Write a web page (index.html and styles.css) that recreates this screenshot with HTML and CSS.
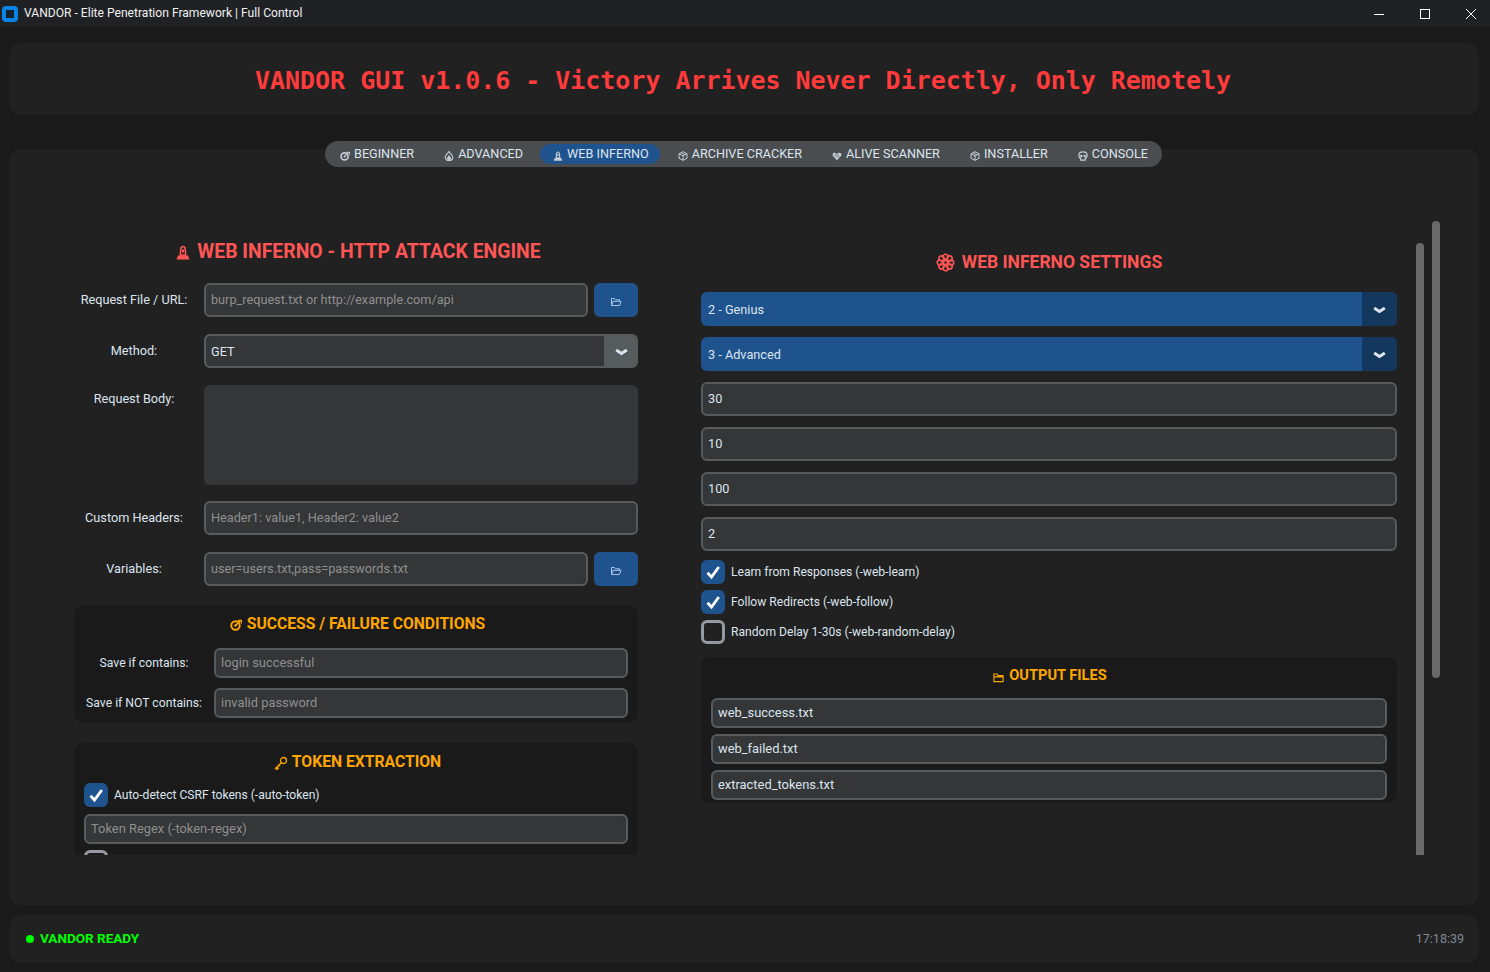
FILE: index.html
```html
<!DOCTYPE html>
<html lang="en">
<head>
    <meta charset="UTF-8">
    <title>VANDOR - Elite Penetration Framework | Full Control</title>
    <link rel="stylesheet" href="styles.css">
</head>
<body>
    <svg class="defs" aria-hidden="true">
        <symbol id="i-target" viewBox="0 0 12 12"><circle cx="5.5" cy="6.5" r="4.2" fill="none" stroke="currentColor" stroke-width="2"/><circle cx="5.5" cy="6.5" r="1.2" fill="currentColor"/><path d="M5.5 6.5 10 2M8 1.5h3.500v3" fill="none" stroke="currentColor" stroke-width="1.500"/></symbol>
        <symbol id="i-fire" viewBox="0 0 12 12"><path d="M6 .5C7 3 10.500 4.500 10.500 7.500 10.500 10 8.500 11.500 6 11.500S1.500 10 1.500 7.500C1.500 4.500 5 3 6 .5Z" fill="none" stroke="currentColor" stroke-width="1.400"/><path d="M6 4.500C6.500 6.500 8.500 7.500 8.500 9 8.500 10.300 7.300 11 6 11S3.500 10.300 3.500 9C3.500 7.500 5.500 6.500 6 4.500Z" fill="currentColor"/></symbol>
        <symbol id="i-siren" viewBox="0 0 14 15"><path d="M.5 14.500 2 10.500H12L13.500 14.500Z" fill="currentColor"/><path d="M4.300 10 4.800 4C5 2.300 5.800 1.500 7 1.500S9 2.300 9.200 4L9.700 10Z" fill="none" stroke="currentColor" stroke-width="1.600"/><rect x="6" y="4.500" width="2" height="3" fill="currentColor"/></symbol>
        <symbol id="i-box" viewBox="0 0 12 12"><path d="M6 .8 10.800 3.300V8.700L6 11.200 1.200 8.700V3.300ZM1.200 3.300 6 5.800 10.800 3.300M6 5.800V11.200M3.600 2 8.400 4.600" fill="none" stroke="currentColor" stroke-width="1.200"/></symbol>
        <symbol id="i-heart" viewBox="0 0 12 12"><path d="M6 11 1.200 6C-.2 3.800 1.500 1.800 3.400 2.200 4.600 2.400 5.500 3.200 6 4 6.500 3.200 7.400 2.400 8.600 2.200 10.500 1.800 12.200 3.800 10.800 6Z" fill="currentColor"/><path d="M2.500 5 9 8M4 3.500l5 2.500" stroke="#4a4d50" stroke-width=".6"/></symbol>
        <symbol id="i-skull" viewBox="0 0 12 12"><path d="M6 1C3 1 1 3 1 5.500 1 7.300 2 8.300 3.300 8.800V11H8.700V8.800C10 8.300 11 7.300 11 5.500 11 3 9 1 6 1Z" fill="none" stroke="currentColor" stroke-width="1.500"/><circle cx="4" cy="6" r="1.500" fill="currentColor"/><circle cx="8" cy="6" r="1.500" fill="currentColor"/></symbol>
        <symbol id="i-flower" viewBox="0 0 20 20" fill="none" stroke="currentColor" stroke-width="1.700"><circle cx="10" cy="4" r="2.700"/><circle cx="10" cy="16" r="2.700"/><circle cx="4" cy="10" r="2.700"/><circle cx="16" cy="10" r="2.700"/><circle cx="5.700" cy="5.700" r="2.700"/><circle cx="14.300" cy="5.700" r="2.700"/><circle cx="5.700" cy="14.300" r="2.700"/><circle cx="14.300" cy="14.300" r="2.700"/><circle cx="10" cy="10" r="2.200"/></symbol>
        <symbol id="i-open" viewBox="0 0 12 10" fill="none" stroke="currentColor" stroke-width="1"><path d="M1.500 8.500V1.500H4.500L5.500 2.800H9.500V4.300M1.500 8.500 3 4.300H11L9.500 8.500Z"/></symbol>
        <symbol id="i-key" viewBox="0 0 14 14" fill="none" stroke="currentColor" stroke-width="1.300"><circle cx="9.500" cy="4.500" r="3"/><path d="M7.300 6.700 1.500 12.500 3 13.500 4.300 12.200 3.300 11.200M5 9l1.200 1.200"/></symbol>
        <symbol id="i-folder" viewBox="0 0 12 11" fill="none" stroke="currentColor" stroke-width="1.200"><path d="M1 2.600V10H11V3.500H5.500L4.500 1.600H1ZM1 4.800H11"/></symbol>
        <symbol id="i-check" viewBox="0 0 24 24"><path d="M6.500 12.800 10.500 17 17.800 7" fill="none" stroke="#fff" stroke-width="2.800"/></symbol>
        <symbol id="i-chevron" viewBox="0 0 13 8"><path d="M1.200 2 6.500 5.500 11.800 2" fill="none" stroke="currentColor" stroke-width="3"/></symbol>
    </svg>

    <div class="titlebar">
        <span class="app-icon"></span>
        <span class="titlebar-text">VANDOR - Elite Penetration Framework | Full Control</span>
        <div class="win-controls">
            <svg width="12" height="12" viewBox="0 0 12 12"><path d="M1 6.500H11" stroke="#fff"/></svg>
            <svg width="12" height="12" viewBox="0 0 12 12"><rect x="1.500" y="1.500" width="9" height="9" fill="none" stroke="#fff"/></svg>
            <svg width="12" height="12" viewBox="0 0 12 12"><path d="M1 1 11 11M11 1 1 11" stroke="#fff"/></svg>
        </div>
    </div>

    <div class="header">
        <h1>VANDOR GUI v1.0.6 - Victory Arrives Never Directly, Only Remotely</h1>
    </div>

    <div class="main">
        <div class="tabs">
            <div class="tab"><svg class="tab-icon"><use href="#i-target"/></svg>BEGINNER</div>
            <div class="tab"><svg class="tab-icon"><use href="#i-fire"/></svg>ADVANCED</div>
            <div class="tab active"><svg class="tab-icon"><use href="#i-siren"/></svg>WEB INFERNO</div>
            <div class="tab"><svg class="tab-icon"><use href="#i-box"/></svg>ARCHIVE CRACKER</div>
            <div class="tab"><svg class="tab-icon"><use href="#i-heart"/></svg>ALIVE SCANNER</div>
            <div class="tab"><svg class="tab-icon"><use href="#i-box"/></svg>INSTALLER</div>
            <div class="tab"><svg class="tab-icon"><use href="#i-skull"/></svg>CONSOLE</div>
        </div>

        <div class="panes">
            <div class="left-col">
                <h2 class="heading heading-left"><svg class="heading-icon"><use href="#i-siren"/></svg>WEB INFERNO - HTTP ATTACK ENGINE</h2>

                <div class="row">
                    <label class="row-label">Request File / URL:</label>
                    <input class="field" type="text" placeholder="burp_request.txt or http://example.com/api">
                    <button class="browse"><svg class="browse-icon"><use href="#i-open"/></svg></button>
                </div>
                <div class="row">
                    <label class="row-label">Method:</label>
                    <div class="select select-grey">
                        <span class="select-value">GET</span>
                        <span class="select-arrow"><svg class="chevron"><use href="#i-chevron"/></svg></span>
                    </div>
                </div>
                <div class="row row-top row-body">
                    <label class="row-label">Request Body:</label>
                    <textarea class="body-text"></textarea>
                </div>
                <div class="row">
                    <label class="row-label">Custom Headers:</label>
                    <input class="field" type="text" placeholder="Header1: value1, Header2: value2">
                </div>
                <div class="row">
                    <label class="row-label">Variables:</label>
                    <input class="field" type="text" placeholder="user=users.txt,pass=passwords.txt">
                    <button class="browse"><svg class="browse-icon"><use href="#i-open"/></svg></button>
                </div>

                <div class="group group-conditions">
                    <h3 class="group-title"><svg class="group-icon"><use href="#i-target"/></svg>SUCCESS / FAILURE CONDITIONS</h3>
                    <div class="group-row">
                        <label class="row-label">Save if contains:</label>
                        <input class="field field-small" type="text" placeholder="login successful">
                    </div>
                    <div class="group-row">
                        <label class="row-label">Save if NOT contains:</label>
                        <input class="field field-small" type="text" placeholder="invalid password">
                    </div>
                </div>

                <div class="group group-token">
                    <h3 class="group-title"><svg class="group-icon group-icon-key"><use href="#i-key"/></svg>TOKEN EXTRACTION</h3>
                    <div class="check-row">
                        <span class="check on"><svg class="tick"><use href="#i-check"/></svg></span>
                        <span class="check-text">Auto-detect CSRF tokens (-auto-token)</span>
                    </div>
                    <input class="field field-small field-block" type="text" placeholder="Token Regex (-token-regex)">
                    <div class="check-row">
                        <span class="check"></span>
                    </div>
                </div>
            </div>

            <div class="right-col">
                <h2 class="heading heading-small"><svg class="heading-icon heading-icon-flower"><use href="#i-flower"/></svg>WEB INFERNO SETTINGS</h2>

                <div class="select select-blue">
                    <span class="select-value">2 - Genius</span>
                    <span class="select-arrow"><svg class="chevron"><use href="#i-chevron"/></svg></span>
                </div>
                <div class="select select-blue">
                    <span class="select-value">3 - Advanced</span>
                    <span class="select-arrow"><svg class="chevron"><use href="#i-chevron"/></svg></span>
                </div>
                <input class="field field-stack" type="text" value="30">
                <input class="field field-stack" type="text" value="10">
                <input class="field field-stack" type="text" value="100">
                <input class="field field-stack" type="text" value="2">

                <div class="checks">
                    <div class="check-row">
                        <span class="check on"><svg class="tick"><use href="#i-check"/></svg></span>
                        <span class="check-text">Learn from Responses (-web-learn)</span>
                    </div>
                    <div class="check-row">
                        <span class="check on"><svg class="tick"><use href="#i-check"/></svg></span>
                        <span class="check-text">Follow Redirects (-web-follow)</span>
                    </div>
                    <div class="check-row">
                        <span class="check"></span>
                        <span class="check-text">Random Delay 1-30s (-web-random-delay)</span>
                    </div>
                </div>

                <div class="group group-output">
                    <h3 class="group-title group-title-small"><svg class="group-icon group-icon-folder"><use href="#i-folder"/></svg>OUTPUT FILES</h3>
                    <input class="field field-small field-block" type="text" value="web_success.txt">
                    <input class="field field-small field-block" type="text" value="web_failed.txt">
                    <input class="field field-small field-block" type="text" value="extracted_tokens.txt">
                </div>
            </div>

            <div class="scroll-inner"></div>
            <div class="scroll-outer"></div>
        </div>
    </div>

    <div class="footer">
        <span class="status"><span class="status-dot"></span>VANDOR READY</span>
        <span class="clock">17:18:39</span>
    </div>
</body>
</html>
```

FILE: styles.css
```css
* {
    box-sizing: border-box;
    margin: 0;
    padding: 0;
}

html, body {
    height: 100%;
}

body {
    background-color: #1a1a1a;
    color: #dce4ee;
    font-family: Roboto, "Liberation Sans", sans-serif;
    font-size: 13px;
    overflow: hidden;
}

.defs {
    display: none;
}

/* window chrome */
.titlebar {
    display: flex;
    align-items: center;
    height: 27px;
    padding-left: 2px;
    background-color: #1f2125;
}

.app-icon {
    width: 16px;
    height: 16px;
    margin-right: 6px;
    border: 4px solid #0a84e8;
    border-radius: 4px;
    background-color: #14202c;
}

.titlebar-text {
    padding-bottom: 1px;
    font-size: 12.1px;
    color: #f0f0f0;
}

.win-controls {
    display: flex;
    gap: 34px;
    margin-left: auto;
    margin-right: 13px;
}

.header {
    display: flex;
    align-items: center;
    justify-content: center;
    height: 72px;
    margin: 16px 12px 0 9px;
    padding-top: 2px;
    border-radius: 12px;
    background-color: #212121;
    margin-right: 11px;
}

h1 {
    font-family: "DejaVu Sans Mono", "Liberation Mono", monospace;
    font-size: 24.95px;
    font-weight: 700;
    color: #ff3b3b;
    margin-left: -2px;
}

.main {
    height: 756px;
    margin: 34px 11px 0 9px;
    border-radius: 12px;
    background-color: #212121;
}

/* tabs */
.tabs {
    display: flex;
    gap: 5px;
    position: relative;
    top: -8px;
    width: 837px;
    height: 26px;
    margin-left: 316px;
    padding: 3px 2px;
    border-radius: 13px;
    background-color: #4a4d50;
}

.tab {
    display: flex;
    align-items: center;
    gap: 4px;
    padding: 0 12px 2px 13px;
    border-radius: 10px;
    font-size: 12.65px;
    color: #dce4ee;
    white-space: nowrap;
}

.tab.active {
    padding-right: 11px;
    background-color: #1f538d;
}

.tab-icon {
    width: 10px;
    height: 10px;
    margin-top: 5px;
    color: #c4ccd6;
}

/* panes */
.panes {
    display: flex;
    align-items: flex-start;
    height: 634px;
    margin-top: 46px;
    padding-left: 65px;
    overflow: hidden;
}

.left-col {
    flex: none;
    width: 564px;
    margin-right: 63px;
}

.right-col {
    flex: none;
    width: 696px;
    padding-top: 31px;
}

.scroll-inner {
    flex: none;
    width: 8px;
    height: 612px;
    margin-top: 22px;
    margin-left: 19px;
    border-radius: 4px 4px 0 0;
    background-color: #696969;
}

.scroll-outer {
    flex: none;
    width: 8px;
    height: 457px;
    margin-left: 8px;
    border-radius: 4px;
    background-color: #696969;
}

.heading {
    display: flex;
    align-items: center;
    justify-content: center;
    height: 22px;
    margin-top: 19px;
    margin-bottom: 21px;
    font-size: 19.4px;
    font-weight: 700;
    color: #ff5555;
}

.heading-left {
    padding-left: 5px;
}

.heading-small {
    height: 20px;
    margin-top: 0;
    margin-bottom: 20px;
    font-size: 17.5px;
}

.heading-icon {
    width: 14px;
    height: 15px;
    margin-right: 7px;
    margin-top: 3px;
}

.heading-icon-flower {
    width: 19px;
    height: 19px;
    margin-right: 7px;
    margin-top: 0;
}

/* form rows */
.row {
    display: flex;
    align-items: center;
    margin-bottom: 17px;
}

.row-top {
    align-items: flex-start;
}

.row-body {
    margin-bottom: 16px;
}

.row-label {
    flex: none;
    width: 120px;
    margin-right: 10px;
    padding-bottom: 2px;
    font-size: 12.7px;
    text-align: center;
}

.row-top .row-label {
    padding-top: 6px;
}

.field {
    flex: 1;
    min-width: 0;
    height: 34px;
    padding: 0 5px 2px;
    border: 2px solid #565b5e;
    border-radius: 6px;
    background-color: #343638;
    color: #dce4ee;
    font-family: Roboto, "Liberation Sans", sans-serif;
    font-size: 12.7px;
    outline: none;
}

.field::placeholder {
    color: #8f8f8f;
    opacity: 1;
}

.field-stack {
    display: block;
    width: 100%;
    margin-top: 11px;
}

.field-small {
    height: 30px;
    font-size: 12.9px;
}

.field-block {
    display: block;
    width: 100%;
    margin-bottom: 6px;
}

.body-text {
    flex: 1;
    height: 100px;
    border: none;
    border-radius: 6px;
    background-color: #343638;
    resize: none;
    outline: none;
}

.browse {
    flex: none;
    display: flex;
    align-items: center;
    justify-content: center;
    width: 44px;
    height: 34px;
    margin-left: 6px;
    border: none;
    border-radius: 6px;
    background-color: #1f538d;
}

.browse-icon {
    width: 12px;
    height: 10px;
    margin-top: 4px;
    color: #a9c6e6;
}

/* dropdowns */
.select {
    display: flex;
    flex: 1;
    align-items: stretch;
    height: 34px;
    border-radius: 6px;
    overflow: hidden;
}

.select-value {
    flex: 1;
    align-self: center;
    padding-left: 7px;
    font-size: 12.7px;
}

.select-arrow {
    flex: none;
    display: flex;
    align-items: center;
    justify-content: center;
    width: 35px;
}

.chevron {
    width: 13px;
    height: 8px;
    margin-top: 2px;
    color: #dce4ee;
}

.select-grey {
    border: 2px solid #565b5e;
    background-color: #343638;
}

.select-grey .select-value {
    padding-left: 5px;
}

.select-grey .select-arrow {
    width: 32px;
    padding-left: 2px;
    background-color: #565b5e;
}

.select-blue {
    background-color: #1f538d;
    margin-bottom: 11px;
}

.select-blue .select-arrow {
    padding-right: 1px;
    background-color: #14375e;
}

.select-blue + .field-stack {
    margin-top: 0;
}

/* grouped frames */
.group {
    border-radius: 10px;
    background-color: #1a1a1a;
    padding: 8px 10px 5px;
}

.group-conditions {
    margin-top: 19px;
    margin-bottom: 20px;
}

.group-output {
    margin-top: 13px;
    padding-bottom: 3px;
}

.group-output .field-block:last-child {
    margin-bottom: 0;
}

.group-title {
    display: flex;
    align-items: center;
    justify-content: center;
    height: 20px;
    margin-bottom: 15px;
    padding-left: 3px;
    font-size: 15.7px;
    font-weight: 700;
    color: #ffa500;
}

.group-token .group-title {
    margin-bottom: 12px;
}

.group-title-small {
    height: 20px;
    margin-bottom: 13px;
    padding-left: 2px;
    font-size: 14.6px;
}

.group-icon {
    width: 12px;
    height: 12px;
    margin-right: 5px;
    margin-top: 3px;
}

.group-icon-key {
    width: 14px;
    height: 14px;
    margin-right: 4px;
}

.group-icon-folder {
    width: 11px;
    height: 11px;
    margin-top: 5px;
}

.group-row {
    display: flex;
    align-items: center;
    margin-bottom: 10px;
}

.group-row:last-child {
    margin-bottom: 0;
}

.group-row .row-label {
    padding-bottom: 0;
    font-size: 12.2px;
}

/* checkboxes */
.checks {
    display: flex;
    flex-direction: column;
    gap: 6px;
    margin-top: 9px;
}

.check-row {
    display: flex;
    align-items: center;
    gap: 6px;
    font-size: 12.1px;
}

.check-text {
    padding-bottom: 1px;
}

.group-token .check-row {
    margin-bottom: 7px;
}

.check {
    flex: none;
    width: 24px;
    height: 24px;
    border: 3px solid #949a9f;
    border-radius: 6px;
}

.check.on {
    border: none;
    background-color: #1f538d;
}

.tick {
    display: block;
    width: 24px;
    height: 24px;
}

/* status bar */
.footer {
    display: flex;
    align-items: center;
    justify-content: space-between;
    height: 48px;
    margin: 10px 11px 0 9px;
    padding: 0 15px 2px 17px;
    border-radius: 12px;
    background-color: #212121;
}

.status {
    display: flex;
    align-items: center;
    gap: 6px;
    font-size: 13.5px;
    font-weight: 700;
    color: #00ff00;
}

.status-dot {
    width: 8px;
    height: 8px;
    margin-top: 1px;
    border-radius: 50%;
    background-color: #00ff00;
}

.clock {
    font-size: 12.5px;
    color: #7f8a96;
}
```
